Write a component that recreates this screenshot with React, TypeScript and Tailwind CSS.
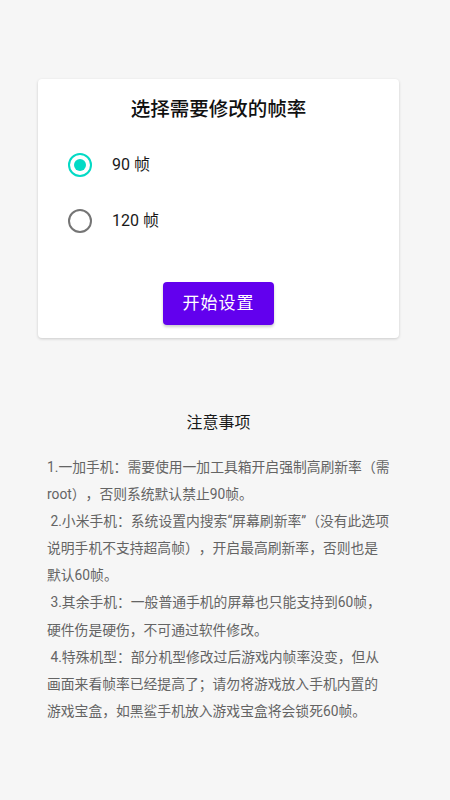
import { useState } from "react"

const options = [
  { value: 90, label: "90 帧" },
  { value: 120, label: "120 帧" },
]

const notes = `1.一加手机：需要使用一加工具箱开启强制高刷新率（需root），否则系统默认禁止90帧。
 2.小米手机：系统设置内搜索“屏幕刷新率”（没有此选项说明手机不支持超高帧），开启最高刷新率，否则也是默认60帧。
 3.其余手机：一般普通手机的屏幕也只能支持到60帧，硬件伤是硬伤，不可通过软件修改。
 4.特殊机型：部分机型修改过后游戏内帧率没变，但从画面来看帧率已经提高了；请勿将游戏放入手机内置的游戏宝盒，如黑鲨手机放入游戏宝盒将会锁死60帧。`

function Radio({ checked }: { checked: boolean }) {
  return (
    <span
      className={
        checked
          ? "flex h-[24px] w-[24px] items-center justify-center rounded-full border-[2.5px] border-[#03dac5]"
          : "flex h-[24px] w-[24px] items-center justify-center rounded-full border-[2.5px] border-[#757575]"
      }
    >
      {checked && <span className="h-[12px] w-[12px] rounded-full bg-[#03dac5]" />}
    </span>
  )
}

export default function App() {
  const [rate, setRate] = useState(90)

  return (
    <div
      className="min-h-screen w-full bg-[#f6f6f6] pt-[79px] [text-spacing-trim:space-all]"
      style={{ fontFamily: "Roboto, 'Noto Sans CJK SC', sans-serif" }}
    >
      <div className="ml-[38px] w-[361px]">
        {/* frame rate card */}
        <div className="flex flex-col rounded-[4px] bg-white pt-[17px] pb-[13px] shadow-[0_1px_3px_rgba(0,0,0,0.18)]">
          <h1 className="text-center text-[19.5px] leading-[28px] font-medium text-[#111111]">
            选择需要修改的帧率
          </h1>

          <div className="mt-[17px] flex flex-col gap-[8px]">
            {options.map((o) => (
              <button
                key={o.value}
                onClick={() => setRate(o.value)}
                className="flex h-[48px] items-center pl-[30px] text-left"
              >
                <Radio checked={rate === o.value} />
                <span className="ml-[20px] text-[16px] text-[#1a1a1a]">{o.label}</span>
              </button>
            ))}
          </div>

          <div className="mt-[37px] flex justify-center">
            <button className="h-[43px] w-[111px] rounded-[4px] bg-[#6200ee] text-[17px] tracking-[1px] text-white shadow-[0_2px_3px_rgba(0,0,0,0.2)]">
              开始设置
            </button>
          </div>
        </div>

        {/* notes */}
        <h2 className="mt-[73px] text-center text-[16px] leading-[24px] text-[#1a1a1a]">注意事项</h2>
        <p className="mt-[19px] pl-[9px] pr-[8.5px] text-[13.8px] leading-[27.1px] whitespace-pre-wrap text-[#646464]">
          {notes}
        </p>
      </div>
    </div>
  )
}
